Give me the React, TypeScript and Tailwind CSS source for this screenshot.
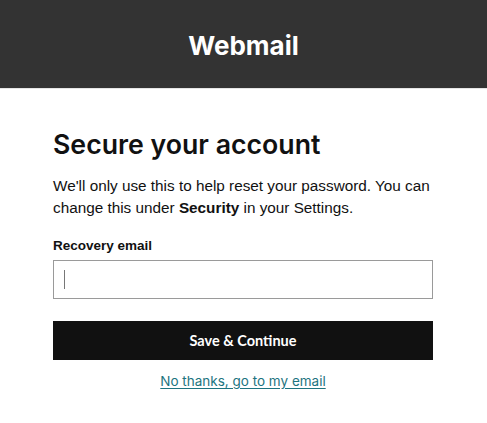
export default function App() {
  return (
    <div className="min-h-[423px] bg-white font-['Liberation_Sans',Arial,sans-serif] text-[#111]">
      <header className="h-[89px] bg-[#333333] border-b border-[#e5e5e5] flex items-center justify-center pt-[2px]">
        <h1 className="text-white text-[26px] font-bold font-['Inter',sans-serif]">Webmail</h1>
      </header>

      <main className="pl-[53px] pt-[37px] w-[433px]">
        <h2 className="text-[26.7px] leading-[36px] font-semibold font-['Inter',sans-serif] text-[#111]">
          Secure your account
        </h2>
        <p className="mt-[13px] text-[15.3px] leading-[22px] text-[#111] w-[400px]">
          <span className="block whitespace-nowrap">We'll only use this to help reset your password. You can</span>
          <span className="block whitespace-nowrap">
            change this under <b>Security</b> in your Settings.
          </span>
        </p>

        <label className="block mt-[18px] text-[13.5px] font-bold leading-[18px]" htmlFor="recovery">
          Recovery email
        </label>
        <div className="mt-[5px] h-[39px] border border-[#9a9a9a] relative">
          <input id="recovery" className="w-full h-full outline-none px-3" />
          <span className="absolute left-[10px] top-[9px] w-px h-[19px] bg-[#777]" />
        </div>

        <button className="mt-[22px] w-full h-[39px] bg-[#111111] text-white text-[14.5px] font-bold font-['Lato',sans-serif]">
          Save &amp; Continue
        </button>

        <div className="mt-[11px] text-center leading-[20px]">
          <a href="#" className="text-[13.5px] text-[#1d7480] underline underline-offset-2 font-['Inter',sans-serif]">
            No thanks, go to my email
          </a>
        </div>
      </main>
    </div>
  );
}
